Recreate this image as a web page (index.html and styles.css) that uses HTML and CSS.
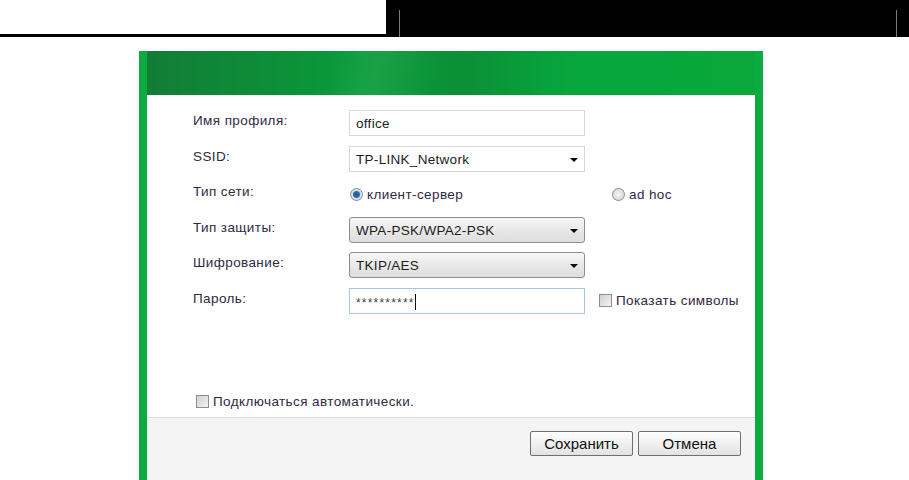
FILE: index.html
```html
<!DOCTYPE html>
<html lang="ru">
<head>
    <meta charset="UTF-8">
    <title>Профиль</title>
    <link rel="stylesheet" href="styles.css">
</head>
<body>

    <div class="topbar">
        <div class="topbar-left"></div>
        <div class="topbar-right">
            <span class="rule"></span>
            <span class="rule"></span>
        </div>
    </div>

    <div class="dialog">
        <div class="dialog-head"></div>

        <div class="dialog-body">
            <div class="form">
                <div class="label">Имя профиля:</div>
                <div class="field">office</div>
                <div></div>

                <div class="label">SSID:</div>
                <div class="field select">TP-LINK_Network<span class="arrow"></span></div>
                <div></div>

                <div class="label">Тип сети:</div>
                <div class="radios">
                    <span class="radio-item first"><span class="radio on"></span>клиент-сервер</span>
                    <span class="radio-item"><span class="radio"></span>ad hoc</span>
                </div>

                <div class="label">Тип защиты:</div>
                <div class="field select grey">WPA-PSK/WPA2-PSK<span class="arrow"></span></div>
                <div></div>

                <div class="label">Шифрование:</div>
                <div class="field select grey">TKIP/AES<span class="arrow"></span></div>
                <div></div>

                <div class="label">Пароль:</div>
                <div class="field focus"><span class="stars">**********</span><span class="caret"></span></div>
                <div class="check show"><span class="box"></span>Показать символы</div>
            </div>

            <div class="check auto"><span class="box"></span>Подключаться автоматически.</div>
        </div>

        <div class="dialog-foot">
            <button>Сохранить</button>
            <button>Отмена</button>
        </div>
    </div>

</body>
</html>
```

FILE: styles.css
```css
body {
    margin: 0;
    background: white;
    font-family: "Liberation Sans", Arial, sans-serif;
    font-size: 13.5px;
    color: #31293f;
}
.topbar {
    display: flex;
    height: 37px;
}
.topbar-left {
    width: 386px;
    height: 34px;
    border-bottom: 3px solid black;
}
.topbar-right {
    flex: 1;
    background: black;
    display: flex;
    justify-content: space-between;
    padding: 10px 12px 0 13px;
}
.rule {
    width: 1px;
    background: #7a7a7a;
}
.dialog {
    width: 608px;
    margin: 14px 0 0 139px;
    padding: 0 8px 10px;
    background: #0bab41;
}
.dialog-head {
    height: 44px;
    background:
        linear-gradient(105deg, transparent 30%, rgba(255,255,255,0.07) 38%, transparent 48%),
        linear-gradient(to right, #137c36, #089c3a 35%, #0b8f37 52%, #07a73d 70%, #09a73c);
}
.dialog-body {
    height: 322px;
    background: white;
    display: flex;
    flex-direction: column;
}
.form {
    display: grid;
    grid-template-columns: 156px 236px auto;
    grid-auto-rows: 26px;
    row-gap: 9.6px;
    padding: 15px 0 0 46px;
}
.label {
    padding-top: 3px;
    letter-spacing: 0.4px;
}
.field {
    position: relative;
    box-sizing: border-box;
    border: 1px solid #d6d6d6;
    padding: 5px 0 0 6px;
    color: #1c1c1c;
    letter-spacing: 0.3px;
}
.select.grey {
    border: 1px solid #8d8d8d;
    border-radius: 3px;
    background: linear-gradient(#f7f7f7, #e6e6e6 60%, #dedede);
}
.field.focus {
    border-color: #a9c6e0;
}
.arrow {
    position: absolute;
    right: 6px;
    top: 11px;
    border-left: 4px solid transparent;
    border-right: 4px solid transparent;
    border-top: 4px solid black;
}
.stars {
    font-size: 12px;
    letter-spacing: 1.2px;
    color: #444;
    vertical-align: -1px;
}
.caret {
    display: inline-block;
    width: 1px;
    height: 16px;
    background: black;
    vertical-align: -4px;
}
.radios {
    grid-column: 2 / 4;
    display: flex;
    align-items: center;
    padding-left: 1px;
}
.radio-item {
    display: flex;
    align-items: center;
    gap: 4px;
    letter-spacing: 0.4px;
}
.radio-item.first {
    width: 262px;
}
.radio {
    width: 11px;
    height: 11px;
    border: 1px solid #8c8c8c;
    border-radius: 50%;
    background: radial-gradient(circle, #f4f4f4, #d2d2d2);
}
.radio.on {
    background: radial-gradient(circle, #1f5c96 0, #2b6aa8 3px, #cfdbe6 4px, #e9edf1);
}
.check {
    display: flex;
    align-items: center;
    gap: 4px;
    letter-spacing: 0.4px;
}
.check.show {
    padding-left: 14px;
    align-self: center;
}
.check.auto {
    margin-top: auto;
    margin-bottom: 8px;
    padding-left: 49px;
}
.box {
    width: 11px;
    height: 11px;
    border: 1px solid #8e8e8e;
    background: linear-gradient(135deg, #d0d0d0, #f4f4f4);
}
.dialog-foot {
    height: 51px;
    border-top: 1px solid #dcdcdc;
    background: #f4f4f4;
    display: flex;
    justify-content: flex-end;
    align-items: flex-start;
    gap: 5px;
    padding: 13px 14px 0 0;
}
button {
    width: 103px;
    height: 25px;
    border: 1px solid #6f6f6f;
    border-radius: 2px;
    background: linear-gradient(#ffffff, #f0f0f0 50%, #e2e2e2);
    font-family: "Liberation Sans", Arial, sans-serif;
    font-size: 15px;
    color: #111;
    padding: 0;
}
```
